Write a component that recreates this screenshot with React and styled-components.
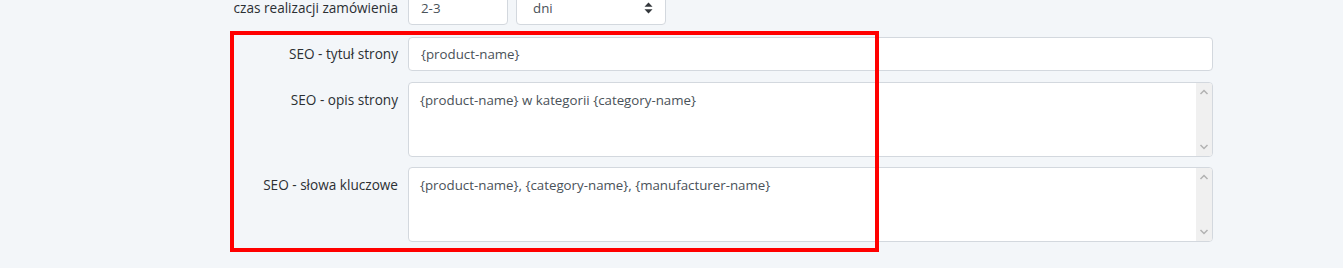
import React from "react";
import styled, { createGlobalStyle } from "styled-components";

const Global = createGlobalStyle`
  html, body { margin: 0; padding: 0; background: #f3f6f9; }
  body { font-family: "Open Sans", "Noto Sans", sans-serif; overflow: hidden; }
  * { box-sizing: border-box; }
`;

const Page = styled.div`
  position: relative;
  width: 1343px;
  height: 268px;
  overflow: hidden;
  background: #f3f6f9;
`;

const Form = styled.div`
  display: flex;
  flex-direction: column;
  margin-top: -9px;
  padding-left: 230px;
  width: 1213px;
`;

const Row = styled.div`
  display: grid;
  grid-template-columns: 168px 1fr;
  column-gap: 10px;
  align-items: ${(p) => (p.$top ? "start" : "center")};
  margin-top: ${(p) => p.$mt || 0}px;
`;

const Label = styled.label`
  text-align: right;
  font-size: 13.6px;
  line-height: 16px;
  color: #2b2f33;
  white-space: nowrap;
  padding-top: ${(p) => (p.$top ? 10 : 0)}px;
`;

const Controls = styled.div`
  display: flex;
  gap: 8px;
`;

const Input = styled.input`
  display: block;
  width: ${(p) => (p.$w ? `${p.$w}px` : "100%")};
  height: 34px;
  padding: 0 12px;
  border: 1px solid #d3d8de;
  border-radius: 4px;
  background: #fff;
  font-family: inherit;
  font-size: 13.3px;
  color: #4a5259;
  outline: none;
`;

const SelectBox = styled.div`
  display: flex;
  align-items: center;
  justify-content: space-between;
  width: 150px;
  height: 34px;
  padding: 0 12px 0 16px;
  border: 1px solid #d3d8de;
  border-radius: 4px;
  background: #fff;
  font-size: 13.3px;
  color: #4a5259;
`;

const AreaWrap = styled.div`
  position: relative;
  height: 75px;
  border: 1px solid #d3d8de;
  border-radius: 4px;
  background: #fff;
  overflow: hidden;
`;

const TextArea = styled.textarea`
  display: block;
  width: 100%;
  height: 100%;
  padding: 7px 27px 7px 11px;
  border: none;
  background: transparent;
  font-family: inherit;
  font-size: 13.3px;
  line-height: 20px;
  color: #4a5259;
  resize: none;
  overflow: hidden;
  outline: none;
`;

const ScrollBar = styled.div`
  position: absolute;
  top: 0;
  right: 0;
  bottom: 0;
  width: 16px;
  background: #f0f0f0;
  display: flex;
  flex-direction: column;
  justify-content: space-between;
  align-items: center;
  padding: 5px 0;
  pointer-events: none;
`;

const Chevron = ({ down }) => (
  <svg width="10" height="8" viewBox="0 0 10 8">
    <path
      d={down ? "M1.5 2 L5 5.5 L8.5 2" : "M1.5 6 L5 2.5 L8.5 6"}
      fill="none"
      stroke="#b2b2b2"
      strokeWidth="1.5"
    />
  </svg>
);

const Highlight = styled.div`
  position: absolute;
  left: 230px;
  top: 31px;
  width: 649px;
  height: 221px;
  border: 4px solid #ff0000;
  pointer-events: none;
`;

const Caret = () => (
  <svg width="9" height="12" viewBox="0 0 9 12">
    <path d="M4.5 0.5 L8.5 4.8 L0.5 4.8 Z" fill="#33373b" />
    <path d="M4.5 11.5 L8.5 7.2 L0.5 7.2 Z" fill="#33373b" />
  </svg>
);

const Area = ({ value }) => (
  <AreaWrap>
    <TextArea defaultValue={value} />
    <ScrollBar>
      <Chevron />
      <Chevron down />
    </ScrollBar>
  </AreaWrap>
);

export default function App() {
  return (
    <Page>
      <Global />
      <Form>
        <Row>
          <Label>czas realizacji zamówienia</Label>
          <Controls>
            <Input $w={100} defaultValue="2-3" />
            <SelectBox>
              <span>dni</span>
              <Caret />
            </SelectBox>
          </Controls>
        </Row>
        <Row $mt={12}>
          <Label>SEO - tytuł strony</Label>
          <Input defaultValue="{product-name}" />
        </Row>
        <Row $mt={11} $top>
          <Label $top>SEO - opis strony</Label>
          <Area value="{product-name} w kategorii {category-name}" />
        </Row>
        <Row $mt={10} $top>
          <Label $top>SEO - słowa kluczowe</Label>
          <Area value="{product-name}, {category-name}, {manufacturer-name}" />
        </Row>
      </Form>
      <Highlight />
    </Page>
  );
}
